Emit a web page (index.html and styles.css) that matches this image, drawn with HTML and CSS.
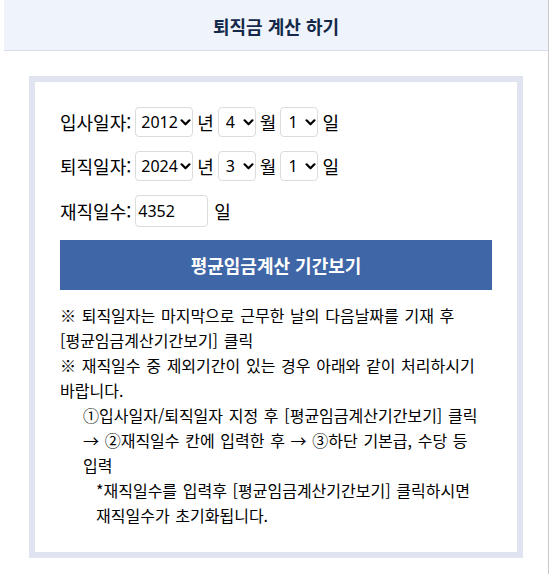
FILE: index.html
```html
<!DOCTYPE html>
<html lang="ko">
<head>
<meta charset="utf-8">
<title>퇴직금 계산 하기</title>
<link rel="stylesheet" href="styles.css">
</head>
<body>
<div class="page">
  <header class="header"><h1 class="title">퇴직금 계산 하기</h1></header>
  <main class="wrap">
    <section class="box">
      <div class="rows">
        <div class="row">
          <span class="label">입사일자:</span>
          <select class="sel sel-year"><option>2012</option></select>
          <span class="unit">년</span>
          <select class="sel sel-small"><option>4</option></select>
          <span class="unit">월</span>
          <select class="sel sel-small"><option>1</option></select>
          <span class="unit">일</span>
        </div>
        <div class="row">
          <span class="label">퇴직일자:</span>
          <select class="sel sel-year"><option>2024</option></select>
          <span class="unit">년</span>
          <select class="sel sel-small"><option>3</option></select>
          <span class="unit">월</span>
          <select class="sel sel-small"><option>1</option></select>
          <span class="unit">일</span>
        </div>
        <div class="row">
          <span class="label">재직일수:</span>
          <input class="days" type="text" value="4352">
          <span class="unit unit-days">일</span>
        </div>
      </div>
      <button class="btn" type="button">평균임금계산 기간보기</button>
      <div class="notes">
        <p class="note">※ 퇴직일자는 마지막으로 근무한 날의 다음날짜를 기재 후 [평균임금계산기간보기] 클릭</p>
        <p class="note">※ 재직일수 중 제외기간이 있는 경우 아래와 같이 처리하시기 바랍니다.</p>
        <p class="note note-step">①입사일자/퇴직일자 지정 후 [평균임금계산기간보기] 클릭 → ②재직일수 칸에 입력한 후 → ③하단 기본급, 수당 등 입력</p>
        <p class="note note-sub">*재직일수를 입력후 [평균임금계산기간보기] 클릭하시면 재직일수가 초기화됩니다.</p>
      </div>
    </section>
  </main>
</div>
</body>
</html>
```
FILE: styles.css
```css
html, body {
  margin: 0;
  padding: 0;
  background: #ffffff;
}
body {
  font-family: "Noto Sans CJK KR", "Noto Sans", sans-serif;
  color: #000000;
}
.page {
  margin-left: 4px;
  width: 544px;
  min-height: 574px;
  border-right: 1px solid #c9c9c9;
}
.header {
  height: 50px;
  background: #eff3fb;
  border-bottom: 1px solid #d9dce2;
  display: flex;
  align-items: center;
  justify-content: center;
}
.title {
  margin: 0;
  font-size: 18px;
  font-weight: 700;
  color: #14294a;
  line-height: 1;
  padding-top: 1px;
}
.wrap {
  padding: 25px;
}
.box {
  border: 6px solid #e0e4f1;
  padding: 25px 25px 24px;
}
.rows {
  display: flex;
  flex-direction: column;
  gap: 14px;
}
.row {
  display: flex;
  align-items: center;
  gap: 4px;
  font-size: 18px;
  line-height: 1;
}
.sel {
  -webkit-appearance: none;
  appearance: none;
  height: 30px;
  box-sizing: border-box;
  border: 1px solid #dcdcdc;
  border-radius: 4px;
  background-color: #ffffff;
  background-image: url("data:image/svg+xml;utf8,<svg xmlns='http://www.w3.org/2000/svg' width='12' height='8' viewBox='0 0 12 8'><path d='M1.5 1.5 L6 6 L10.5 1.5' fill='none' stroke='%23000' stroke-width='2.5' stroke-linecap='round' stroke-linejoin='round'/></svg>");
  background-repeat: no-repeat;
  background-position: right 1px center;
  background-size: 11px 7px;
  font-family: "Noto Sans", "Noto Sans CJK KR", sans-serif;
  font-size: 16px;
  color: #000000;
  padding: 0 0 0 5px;
  margin: 0;
}
.sel-year { width: 58px; }
.sel-small { width: 38px; padding-left: 7px; }
.days {
  width: 73px;
  height: 32px;
  box-sizing: border-box;
  border: 1px solid #dcdcdc;
  border-radius: 4px;
  padding: 0 2px;
  font-family: "Noto Sans", "Noto Sans CJK KR", sans-serif;
  font-size: 16px;
  color: #000000;
  margin: 0;
}
.unit-days { margin-left: 2px; }
.btn {
  display: block;
  width: 100%;
  height: 50px;
  margin-top: 13px;
  border: 0;
  background: #3f67a8;
  color: #ffffff;
  font-family: "Noto Sans CJK KR", sans-serif;
  font-size: 18px;
  font-weight: 700;
  cursor: pointer;
}
.notes {
  margin-top: 13px;
  font-size: 16px;
  line-height: 25px;
  word-break: keep-all;
  word-spacing: 1.2px;
}
.note {
  margin: 0;
}
.note-step {
  padding-left: 23px;
}
.note-sub {
  padding-left: 36px;
}
```
